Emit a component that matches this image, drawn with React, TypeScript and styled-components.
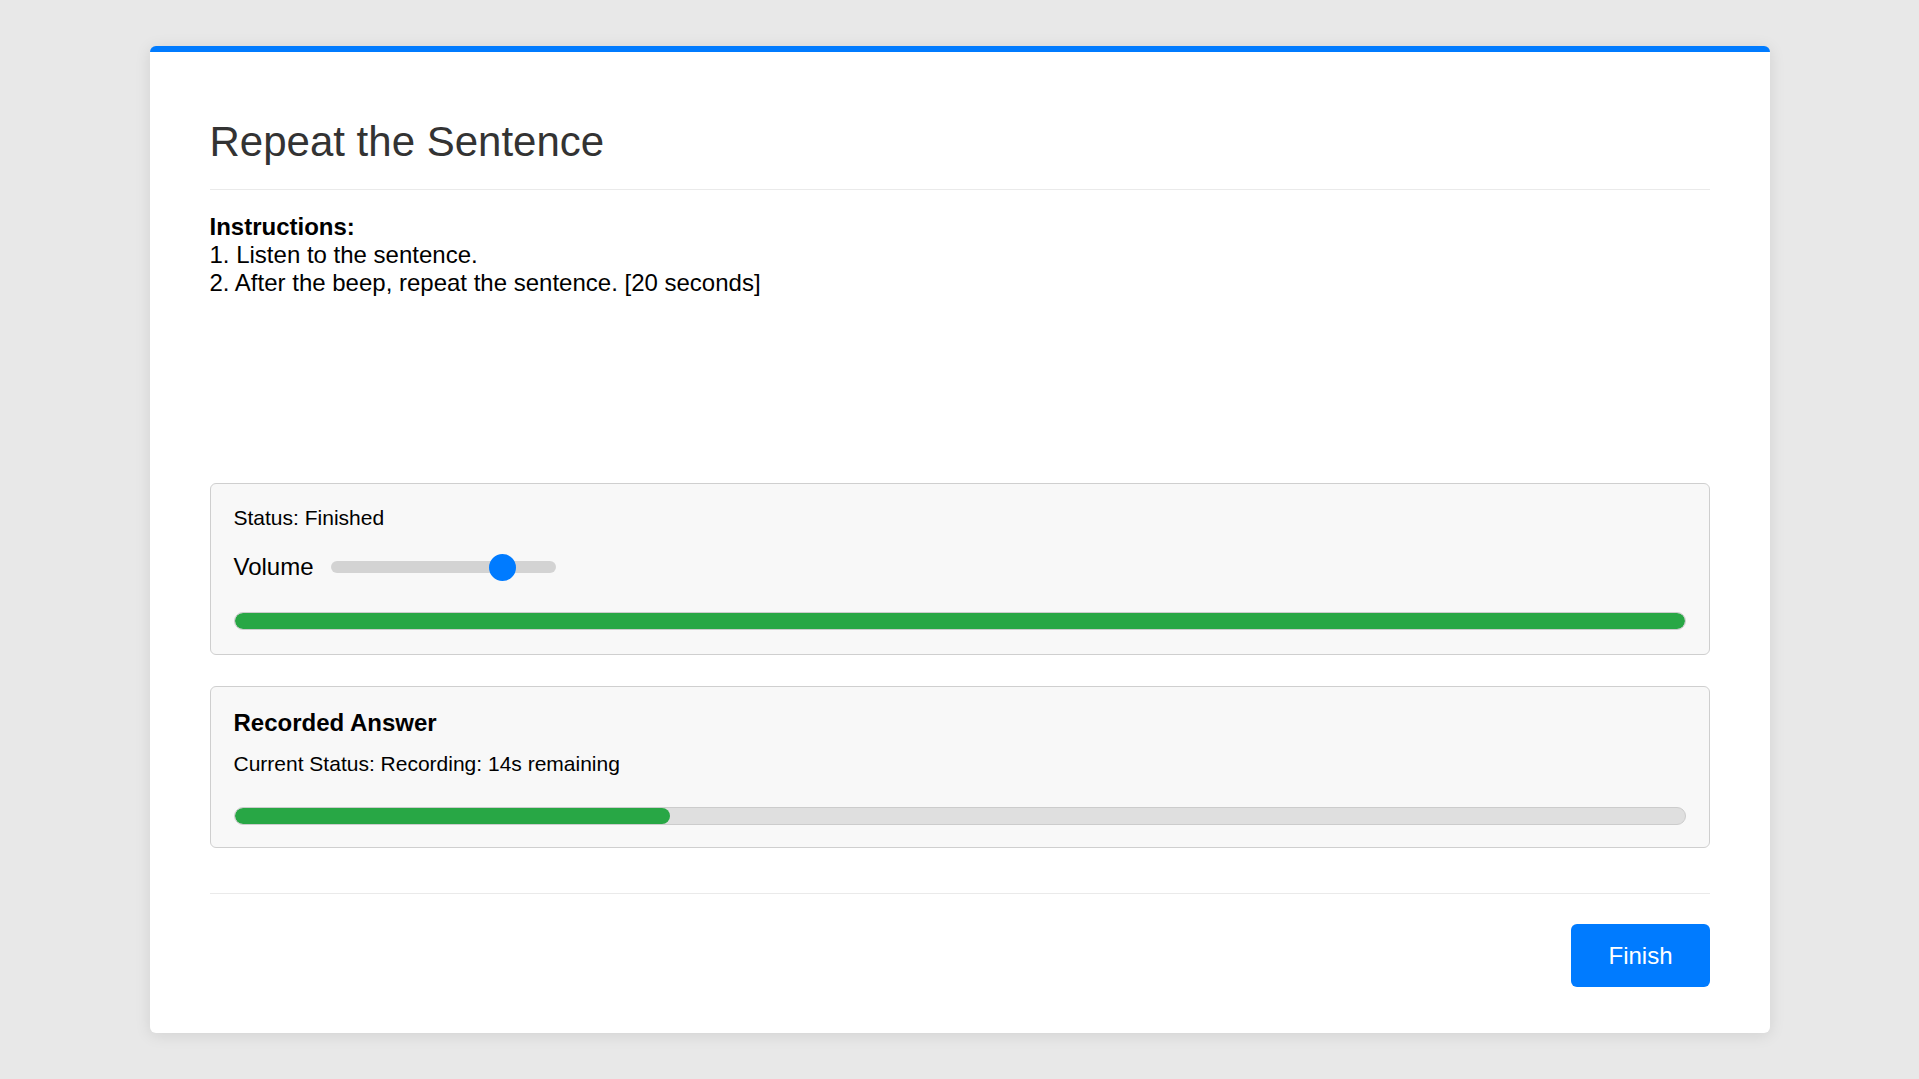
import styled, { createGlobalStyle } from 'styled-components';

const GlobalStyle = createGlobalStyle`
	html,
	body {
		margin: 0;
		padding: 0;
		background: #e8e8e8;
		font-family: 'Liberation Sans', Arial, sans-serif;
		color: #000;
	}
`;

const Page = styled.main`
	padding: 46px 0 30px;
`;

const Card = styled.section`
	box-sizing: border-box;
	max-width: 1620px;
	margin: 0 auto;
	padding: 66px 60px 46px;
	background: #fff;
	border-top: 6px solid #007bff;
	border-radius: 6px;
	box-shadow: 0 2px 16px rgba(0, 0, 0, 0.1);
`;

const Title = styled.h1`
	margin: 0 0 23px;
	padding-bottom: 23px;
	border-bottom: 1px solid #eaeaea;

	font-size: 42px;
	font-weight: 400;
	line-height: normal;
	color: #333;
`;

const Instructions = styled.div`
	min-height: 270px;
	font-size: 24px;
	line-height: normal;
`;

const Line = styled.div<{ $bold?: boolean }>`
	font-weight: ${({ $bold }) => ($bold ? 700 : 400)};
`;

const Panel = styled.div<{ $bottom?: number }>`
	padding: 22px 23px ${({ $bottom }) => $bottom ?? 24}px;
	background: #f8f8f8;
	border: 1px solid #cfcfcf;
	border-radius: 6px;

	& + & {
		margin-top: 31px;
	}
`;

const Status = styled.div`
	font-size: 21px;
	line-height: normal;
`;

const PanelTitle = styled.h3`
	margin: 0 0 15px;
	font-size: 24px;
	font-weight: 700;
	line-height: normal;
`;

const VolumeRow = styled.div`
	display: flex;
	align-items: center;
	gap: 17px;
	height: 28px;
	margin: 23px 0 31px;

	font-size: 24px;
`;

const Slider = styled.input`
	appearance: none;
	-webkit-appearance: none;
	width: 225px;
	height: 12px;
	margin: 0;
	background: #d3d3d3;
	border-radius: 6px;
	outline: none;

	&::-webkit-slider-thumb {
		-webkit-appearance: none;
		appearance: none;
		width: 27px;
		height: 27px;
		border-radius: 50%;
		background: #007bff;
		cursor: pointer;
	}
`;

const Track = styled.div<{ $gap?: number }>`
	box-sizing: border-box;
	height: 18px;
	margin-top: ${({ $gap }) => $gap ?? 0}px;
	background: #dfdfdf;
	border: 1px solid #cccccc;
	border-radius: 9px;
	overflow: hidden;
`;

const Fill = styled.div`
	height: 100%;
	background: #28a745;
	border-radius: 9px;
`;

const Footer = styled.footer`
	display: flex;
	justify-content: flex-end;
	margin-top: 45px;
	padding-top: 30px;
	border-top: 1px solid #eaeaea;
`;

const Button = styled.button`
	padding: 0 37px;
	height: 63px;
	border: none;
	border-radius: 6px;
	background: #007bff;

	font-family: inherit;
	font-size: 24px;
	color: #fff;
	cursor: pointer;
`;

function Progress({ value, gap }: { value: number; gap?: number }) {
	return (
		<Track $gap={gap}>
			<Fill style={{ width: `${value}%` }} />
		</Track>
	);
}

export default function App() {
	return (
		<>
			<GlobalStyle />
			<Page>
				<Card>
					<Title>Repeat the Sentence</Title>
					<Instructions>
						<Line $bold>Instructions:</Line>
						<Line>1. Listen to the sentence.</Line>
						<Line>2. After the beep, repeat the sentence. [20 seconds]</Line>
					</Instructions>

					<Panel>
						<Status>Status: Finished</Status>
						<VolumeRow>
							Volume
							<Slider type="range" min={0} max={100} defaultValue={80} />
						</VolumeRow>
						<Progress value={100} />
					</Panel>

					<Panel $bottom={22}>
						<PanelTitle>Recorded Answer</PanelTitle>
						<Status>Current Status: Recording: 14s remaining</Status>
						<Progress value={30} gap={31} />
					</Panel>

					<Footer>
						<Button>Finish</Button>
					</Footer>
				</Card>
			</Page>
		</>
	);
}
